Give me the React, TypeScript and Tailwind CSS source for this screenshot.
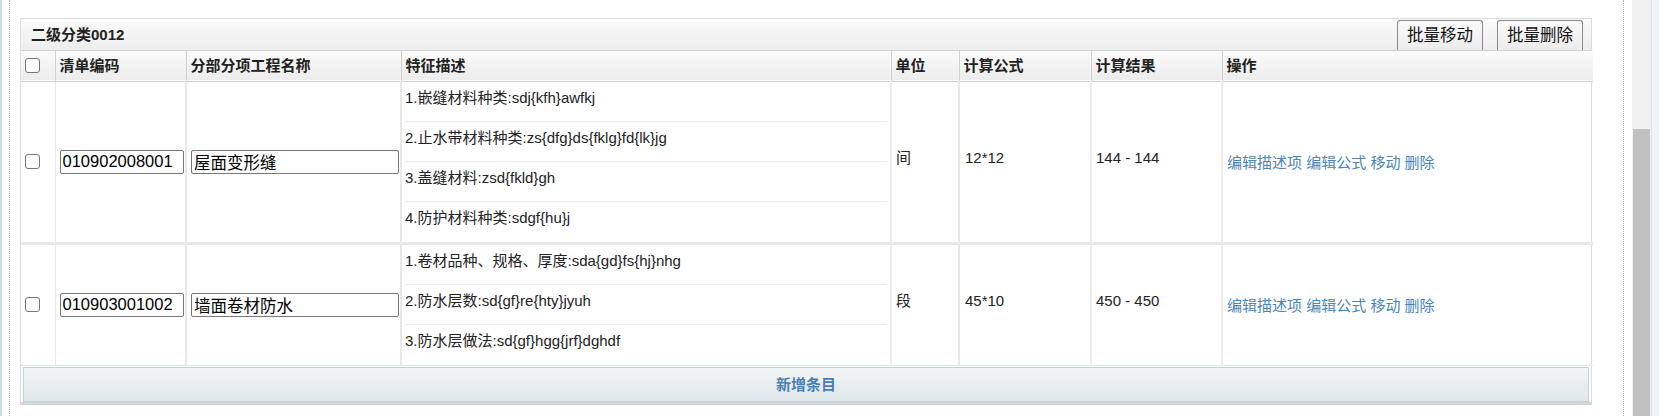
import React from 'react';

const font = { fontFamily: '"Liberation Sans", Arial, "Noto Sans CJK SC", sans-serif' };

const columns = [
  { label: '清单编码', w: 'w-[131px]' },
  { label: '分部分项工程名称', w: 'w-[215px]' },
  { label: '特征描述', w: 'w-[490px]' },
  { label: '单位', w: 'w-[68px]' },
  { label: '计算公式', w: 'w-[132px]' },
  { label: '计算结果', w: 'w-[131px]' },
  { label: '操作', w: 'w-[371px]' },
];

const rows = [
  {
    code: '010902008001',
    name: '屋面变形缝',
    features: [
      '1.嵌缝材料种类:sdj{kfh}awfkj',
      '2.止水带材料种类:zs{dfg}ds{fklg}fd{lk}jg',
      '3.盖缝材料:zsd{fkld}gh',
      '4.防护材料种类:sdgf{hu}j',
    ],
    unit: '间',
    formula: '12*12',
    result: '144 - 144',
  },
  {
    code: '010903001002',
    name: '墙面卷材防水',
    features: [
      '1.卷材品种、规格、厚度:sda{gd}fs{hj}nhg',
      '2.防水层数:sd{gf}re{hty}jyuh',
      '3.防水层做法:sd{gf}hgg{jrf}dghdf',
    ],
    unit: '段',
    formula: '45*10',
    result: '450 - 450',
  },
];

const actions = ['编辑描述项', '编辑公式', '移动', '删除'];

function Checkbox() {
  return <span className="block w-[15px] h-[15px] rounded-[3px] border border-[#767676] bg-white" />;
}

export default function App() {
  return (
    <div className="w-full h-[416px] bg-white flex overflow-hidden text-[#222]" style={font}>
      {/* left frame */}
      <div className="w-[2px] h-full bg-[#c8dce6]" />
      <div className="w-[7px]" />
      <div className="h-full border-l border-dotted border-[#b8b8b8]" />

      {/* content */}
      <div className="w-[1613px] h-full pl-[10px] pt-[18px]">
        <div className="w-[1572px] border-x border-t border-[#dcdcdc] border-b-[3px] border-b-[#d4d4d4]">
          {/* caption */}
          <div className="h-[32px] flex items-end justify-between pl-[10px] pr-[8px] bg-gradient-to-b from-[#fbfbfb] to-[#ededed] border-b border-[#d0d0d0]">
            <span className="self-center text-[15px] font-bold leading-[17px]">二级分类0012</span>
            <div className="flex gap-[14px]">
              {['批量移动', '批量删除'].map((b) => (
                <button
                  key={b}
                  className="w-[86px] h-[30px] border border-b-0 border-[#8a8a8a] rounded-t-[3px] bg-gradient-to-b from-[#fafafa] to-[#ececec] text-[16.5px] leading-[19px] text-[#111]"
                  style={font}
                >
                  {b}
                </button>
              ))}
            </div>
          </div>

          <table className="w-full border-collapse table-fixed">
            <thead>
              <tr className="h-[30px] bg-gradient-to-b from-[#fbfbfb] to-[#ececec] border-b border-[#d0d0d0]">
                <th className="w-[34px] pl-[4px] border-r border-[#d0d0d0]">
                  <Checkbox />
                </th>
                {columns.map((c, i) => (
                  <th
                    key={c.label}
                    className={`${c.w} pl-[4px] text-left text-[15px] font-bold leading-[17px] ${
                      i < columns.length - 1 ? 'border-r border-[#d0d0d0]' : ''
                    }`}
                  >
                    {c.label}
                  </th>
                ))}
              </tr>
            </thead>
            <tbody className="text-[15px] leading-[17px]">
              {rows.map((r, ri) => (
                <tr key={r.code} className={ri === 0 ? 'border-b-[3px] border-[#e8e8e8]' : 'border-b border-[#e4e4e4]'}>
                  <td className="pl-[4px] border-r border-[#e8e8e8] align-middle">
                    <Checkbox />
                  </td>
                  <td className="pl-[4px] border-r-2 border-[#e8e8e8] align-middle">
                    <input
                      readOnly
                      value={r.code}
                      className="w-[124px] h-[24px] px-[2px] border border-[#767676] rounded-[2px] text-[16.5px] text-black outline-none"
                      style={font}
                    />
                  </td>
                  <td className="pl-[4px] border-r-2 border-[#e8e8e8] align-middle">
                    <input
                      readOnly
                      value={r.name}
                      className="w-[208px] h-[24px] px-[2px] border border-[#767676] rounded-[2px] text-[16.5px] text-black outline-none"
                      style={font}
                    />
                  </td>
                  <td className="px-[3px] border-r-2 border-[#ececec] align-top">
                    {r.features.map((f, fi) => (
                      <div
                        key={f}
                        className={`h-[40px] pt-[7px] whitespace-nowrap ${
                          fi < r.features.length - 1 ? 'border-b border-[#ececec]' : ''
                        }`}
                      >
                        {f}
                      </div>
                    ))}
                  </td>
                  <td className="pl-[4px] pb-[8px] border-r-2 border-[#e8e8e8] align-middle">{r.unit}</td>
                  <td className="pl-[5px] pb-[8px] border-r-2 border-[#ececec] align-middle">{r.formula}</td>
                  <td className="pl-[4px] pb-[8px] border-r-2 border-[#ececec] align-middle">{r.result}</td>
                  <td className="pl-[4px] pt-[2px] align-middle text-[#4a86b9] whitespace-nowrap">
                    {actions.map((a, ai) => (
                      <React.Fragment key={a}>
                        <a className="cursor-pointer">{a}</a>
                        {ai < actions.length - 1 ? ' ' : ''}
                      </React.Fragment>
                    ))}
                  </td>
                </tr>
              ))}
            </tbody>
          </table>

          {/* add row bar */}
          <div className="px-[2px] pt-[1px]">
            <button
              className="w-full h-[35px] border border-[#bfd2da] bg-gradient-to-b from-[#f1f5f6] to-[#e0e8ea] text-[15px] font-bold leading-[17px] text-[#4a7db3]"
              style={font}
            >
              新增条目
            </button>
          </div>
        </div>
      </div>

      <div className="h-full border-l border-dotted border-[#b8b8b8]" />
      <div className="w-[8px]" />

      {/* scrollbar */}
      <div className="w-[19px] h-full bg-[#f0f0f0] flex flex-col pl-[1px] pr-[1px]">
        <div className="h-[129px]" />
        <div className="flex-1 bg-[#c1c1c1]" />
      </div>
      <div className="w-[1px] h-full bg-[#d8e4ea]" />
      <div className="flex-1 h-full bg-[#eef3f6]" />
    </div>
  );
}
